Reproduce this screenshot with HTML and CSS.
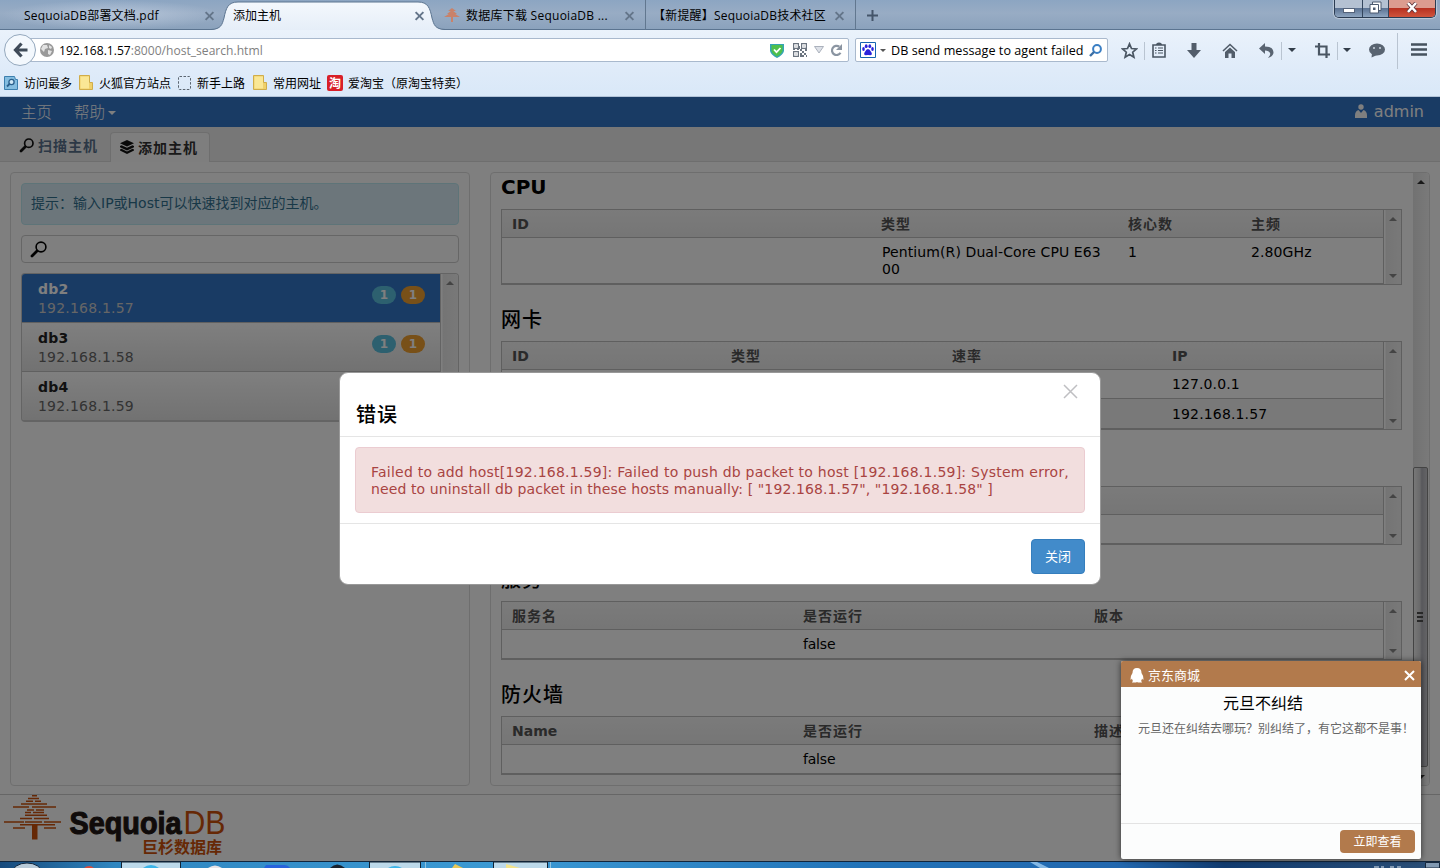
FILE: index.html
```html
<!DOCTYPE html>
<html lang="zh-CN">
<head>
<meta charset="UTF-8" />
<title>添加主机</title>
<link rel="stylesheet" href="styles.css">
</head>
<body>

<!-- 浏览器标签 -->
<div class="tabstrip">
  <div class="btab btab-first"><span>SequoiaDB部署文档.pdf</span><i class="bx"></i></div>
  <div class="btab btab-active">
    <svg class="btab-shape" width="234" height="30" viewBox="0 0 234 30"><defs><linearGradient id="tb" x1="0" y1="0" x2="0" y2="1"><stop offset="0" stop-color="#f4f8fd"/><stop offset="1" stop-color="#e6eef8"/></linearGradient></defs><path d="M0 30C10 29 11 25 13 18C15 8 17 2 27 2H207C217 2 219 8 221 18C223 25 224 29 234 30Z" fill="url(#tb)"/><path d="M0 29.5C10 29 11 25 13 18C15 8 17 2 27 2H207C217 2 219 8 221 18C223 25 224 29 234 29.5" fill="none" stroke="#5b7490"/></svg>
    <span>添加主机</span><i class="bx"></i>
  </div>
  <div class="btab btab-third">
    <svg width="16" height="16" viewBox="0 0 16 16" fill="#c9826a"><path d="M8 1l4 3H4zM8 3l5 4H3zM8 5l8 5H0zM7 10h2v5H7z"/></svg>
    <span>数据库下载 SequoiaDB ...</span><i class="bx"></i>
  </div>
  <div class="btab btab-fourth"><span>【新提醒】SequoiaDB技术社区</span><i class="bx"></i></div>
  <div class="btab-new"><svg width="11" height="11" viewBox="0 0 11 11"><path d="M5.5 0v11M0 5.5h11" stroke="#44556a" stroke-width="2"/></svg></div>
  <div class="winbtns">
    <div class="wb wb-min"><svg width="12" height="6"><rect x=".5" y=".5" width="11" height="4" fill="#fff" stroke="#55637a"/></svg></div>
    <div class="wb wb-max"><svg width="13" height="13" viewBox="0 0 13 13"><path d="M3.500 1h8.500v8.500H3.500z" fill="#fff" stroke="#4d5b70"/><path d="M1 3.500h8.500V12H1z" fill="#fff" stroke="#4d5b70"/><path d="M4 6.500h2.500V9H4z" fill="#4d5b70"/></svg></div>
    <div class="wb wb-close"><svg width="12" height="11" viewBox="0 0 12 11"><path d="M2 1l8 9M10 1l-8 9" stroke="#5a3037" stroke-width="4"/><path d="M2 1l8 9M10 1l-8 9" stroke="#fff" stroke-width="2.600"/></svg></div>
  </div>
</div>

<!-- 地址栏 -->
<div class="navbar">
  <div class="back"><svg width="15" height="16" viewBox="0 0 15 16"><path d="M8.500 1.500L2.500 8l6 6.500M3 8h11.500" fill="none" stroke="#3f4b59" stroke-width="3.200"/></svg></div>
  <div class="url">
    <svg width="14" height="14" viewBox="0 0 14 14"><circle cx="7" cy="7" r="7" fill="#999"/><path d="M3 2l4 0 1 3-3 1-1 3-3-3zM9 2l3 2-1 2-2-1zM8 7l4 1-2 4-2-1z" fill="#e2e2e2"/></svg>
    <span class="addr"><b>192.168.1.57</b>:8000/host_search.html</span>
    <svg width="14" height="15" viewBox="0 0 14 15"><path d="M0 1h14v7q-1 4-7 7Q1 12 0 8z" fill="#35a5b4"/><path d="M1.500 2h11v6q-1 3-5.500 5.500Q2.500 11 1.500 8z" fill="#4fc04c"/><path d="M4 6.500l2.500 2.700L10.500 5" fill="none" stroke="#fff" stroke-width="1.800"/></svg>
    <svg class="qr" width="14" height="14" viewBox="0 0 14 14"><g fill="none" stroke="#6c7580" stroke-width="1.200"><path d="M.6.600h4.800v4.800H.6zM8.600.600h4.800v4.800H8.600zM.6 8.600h4.800v4.800H.6z"/></g><path d="M2.500 2.500h1v1h-1zM10.500 2.500h1v1h-1zM2.500 10.500h1v1h-1zM7 6h2v2H7zM9 8h2v2H9zM12 6h2v2h-2zM7 10h2v4H7zM11 10h2v2h-2zM9 12h2v2H9zM13 12h1v2h-1zM4 6h2v1H4zM0 6h2v1H0zM6 3h1v3H6z" fill="#6c7580"/></svg>
    <svg class="drop" width="10" height="8"><path d="M.5.500h9L5 7z" fill="#dde1e8" stroke="#abb1bc"/></svg>
    <svg class="reload" width="13" height="14" viewBox="0 0 13 14"><path d="M10.500 9.800A4.600 4.600 0 1 1 9.300 3.700" fill="none" stroke="#8b95a2" stroke-width="2.200"/><path d="M12 1v6H6z" fill="#8b95a2"/></svg>
  </div>
  <div class="search">
    <svg width="16" height="16" viewBox="0 0 16 16"><path d="M.5.500h15v15H.5z" fill="#fff" stroke="#1664b0"/><g fill="#2a22dc"><ellipse cx="3.500" cy="7" rx="1.300" ry="1.900"/><ellipse cx="6.200" cy="4.200" rx="1.400" ry="1.900"/><ellipse cx="9.800" cy="4.200" rx="1.400" ry="1.900"/><ellipse cx="12.500" cy="7" rx="1.300" ry="1.900"/><path d="M8 7q1.700 0 3 2.700 2 3-.5 3.500-2.500-.5-5 0-2.500-.5-.5-3.500Q6.300 7 8 7z"/></g></svg>
    <i class="caret-s"></i>
    <span>DB send message to agent failed</span>
    <svg class="mag" width="13" height="13" viewBox="0 0 13 13"><circle cx="8" cy="5" r="3.900" fill="none" stroke="#3b7fc4" stroke-width="2"/><path d="M5 8L1 12" stroke="#3b6ea4" stroke-width="2.400"/></svg>
  </div>
  <div class="tools">
    <div><svg width="17" height="17" viewBox="0 0 17 17"><path d="M8.500 1.800l2 4.700 5 .4-3.800 3.300 1.200 5-4.400-2.700-4.400 2.700 1.200-5L1.500 6.900l5-.4z" fill="none" stroke="#4a5663" stroke-width="1.700"/></svg></div>
    <div class="sep lst"><svg width="14" height="16" viewBox="0 0 14 16"><path d="M1 3h12v12H1z" fill="none" stroke="#4a5663" stroke-width="1.600"/><path d="M4 3q0-2.500 3-2.500T10 3zM3 5.500h1.500v1H3zM6 5.500h5v1H6zM3 8h1.500v1H3zM6 8h5v1H6zM3 10.500h1.500v1H3zM6 10.500h5v1H6z" fill="#4a5663"/></svg></div>
    <div><svg width="14" height="15" viewBox="0 0 14 15"><path d="M4.500 0h5v7H14l-7 8-7-8h4.500z" fill="#525d6a"/></svg></div>
    <div><svg width="16" height="15" viewBox="0 0 16 15"><path d="M1 8l7-6.500L15 8" fill="none" stroke="#525d6a" stroke-width="1.600"/><path d="M3 9l5-4.500L13 9v6H9.500v-4.500h-3V15H3z" fill="#525d6a"/></svg></div>
    <div><svg width="15" height="15" viewBox="0 0 15 15"><path d="M6 0v3.500q8 0 8.500 6Q14.500 13 9 15q3-3 2-5Q10 7.500 6 7.500V11L0 5.500z" fill="#596471"/></svg></div>
    <div class="sep"><i class="caret"></i></div>
    <div class="crop"><svg width="15" height="15" viewBox="0 0 15 15"><path d="M4 0v11.500h11M0 3.500h11.500V15" fill="none" stroke="#4a5663" stroke-width="2.200"/></svg></div>
    <div class="sep"><i class="caret"></i></div>
    <div><svg width="16" height="15" viewBox="0 0 16 15"><ellipse cx="8" cy="6.500" rx="8" ry="6" fill="#596471"/><path d="M3 10l-.5 4.500L8 12z" fill="#596471"/><circle cx="5" cy="5" r="1" fill="#cdd6e0"/><circle cx="11" cy="5" r="1" fill="#cdd6e0"/></svg></div>
    <div class="sep tall"><svg width="16" height="14"><path d="M0 1.500h16M0 6.500h16M0 11.500h16" stroke="#46525e" stroke-width="2.600"/></svg></div>
  </div>
</div>

<!-- 书签栏 -->
<div class="bookmarks">
  <svg width="15" height="16" viewBox="0 0 15 16"><path d="M.5 1.500h10l1 3h2v10H.5z" fill="#84bde0" stroke="#3c7fae"/><circle cx="7.500" cy="7" r="2.600" fill="#cfe8f6" stroke="#2a5f8c" stroke-width="1.300"/><path d="M5.500 9L3 11.500" stroke="#2a5f8c" stroke-width="1.800"/></svg><span class="w1">访问最多</span>
  <svg width="15" height="16" viewBox="0 0 15 16"><path d="M.5.500h10v7h3v7H.5z" fill="#efd06a" stroke="#d0ad4a"/><path d="M1.500 1.500h8.500v12H1.500z" fill="#fae795"/></svg><span class="w2">火狐官方站点</span>
  <svg width="15" height="16"><rect x=".5" y="1.500" width="12" height="13" rx="1" fill="none" stroke="#5b6570" stroke-dasharray="2.500 1.500"/></svg><span class="w3">新手上路</span>
  <svg width="15" height="16" viewBox="0 0 15 16"><path d="M.5.500h10v7h3v7H.5z" fill="#efd06a" stroke="#d0ad4a"/><path d="M1.500 1.500h8.500v12H1.500z" fill="#fae795"/></svg><span class="w4">常用网址</span>
  <em class="tao">淘</em><span>爱淘宝（原淘宝特卖）</span>
</div>

<!-- 页面 -->
<div class="page">
  <div class="topbar">
    <span class="home">主页</span><span>帮助</span><i class="caret-w"></i>
    <span class="user"><svg width="12" height="15" viewBox="0 0 12 15" fill="#fff"><circle cx="6" cy="3" r="2.700"/><path d="M3.500 6L6 9l2.500-3Q12 7 12 11.500V14H0v-2.500Q0 7 3.500 6z"/></svg>admin</span>
  </div>
  <div class="ptabs">
    <div class="ptab"><svg width="15" height="15" viewBox="0 0 15 15"><circle cx="9.800" cy="5.200" r="4.200" fill="none" stroke="#111" stroke-width="1.700"/><path d="M6 9l-4 4" stroke="#111" stroke-width="2.800" stroke-linecap="round"/></svg><span>扫描主机</span></div>
    <div class="ptab on"><svg width="14" height="14" viewBox="0 0 14 14" fill="#111"><path d="M7 0l7 3.300-7 3.200L0 3.300z"/><path d="M0 6l1.500-.8L7 7.800l5.500-2.600L14 6v1.200L7 10.500 0 7.200z"/><path d="M0 9.600l1.500-.8L7 11.400l5.500-2.600 1.500.8v1L7 14 0 10.600z"/></svg><span>添加主机</span></div>
  </div>

  <div class="main">
    <div class="panel left">
      <div class="tip">提示：输入IP或Host可以快速找到对应的主机。</div>
      <div class="filter"><svg width="17" height="17" viewBox="0 0 17 17"><circle cx="11" cy="6" r="4.900" fill="none" stroke="#000" stroke-width="1.600"/><path d="M7 10l-5 5" stroke="#000" stroke-width="2.800" stroke-linecap="round"/></svg></div>
      <div class="hosts">
        <div class="hostlist">
          <div class="host sel"><div><b>db2</b><br>192.168.1.57</div><em class="badge info">1</em><em class="badge warn">1</em></div>
          <div class="host"><div><b>db3</b><br>192.168.1.58</div><em class="badge info">1</em><em class="badge warn">1</em></div>
          <div class="host"><div><b>db4</b><br>192.168.1.59</div></div>
        </div>
        <div class="scroll"><i class="up"></i><i class="down"></i></div>
      </div>
    </div>

    <div class="panel right">
      <div class="detail">
        <h3 class="first">CPU</h3>
        <div class="grid">
          <table>
            <colgroup><col style="width:369px"><col style="width:247px"><col style="width:123px"><col></colgroup>
            <tr><th>ID</th><th class="zh">类型</th><th class="zh">核心数</th><th class="zh">主频</th></tr>
            <tr><td></td><td class="cpu">Pentium(R) Dual-Core CPU E63<br>00</td><td>1</td><td>2.80GHz</td></tr>
          </table>
          <div class="scroll"><i class="up"></i><i class="down"></i></div>
        </div>
        <h3 class="zh">网卡</h3>
        <div class="grid">
          <table>
            <colgroup><col style="width:219px"><col style="width:221px"><col style="width:220px"><col></colgroup>
            <tr><th>ID</th><th class="zh">类型</th><th class="zh">速率</th><th>IP</th></tr>
            <tr><td></td><td></td><td></td><td>127.0.0.1</td></tr>
            <tr class="even"><td></td><td></td><td></td><td>192.168.1.57</td></tr>
          </table>
          <div class="scroll"><i class="up"></i><i class="down"></i></div>
        </div>
        <h3></h3>
        <div class="grid">
          <table>
            <tr><th>&nbsp;</th><th></th><th></th></tr>
            <tr><td>&nbsp;</td><td></td><td></td></tr>
          </table>
          <div class="scroll"><i class="up"></i><i class="down"></i></div>
        </div>
        <h3 class="zh">服务</h3>
        <div class="grid">
          <table>
            <colgroup><col style="width:291px"><col style="width:291px"><col></colgroup>
            <tr><th class="zh">服务名</th><th class="zh">是否运行</th><th class="zh">版本</th></tr>
            <tr><td></td><td class="flag">false</td><td></td></tr>
          </table>
          <div class="scroll"><i class="up"></i><i class="down"></i></div>
        </div>
        <h3 class="zh">防火墙</h3>
        <div class="grid">
          <table>
            <colgroup><col style="width:291px"><col style="width:291px"><col></colgroup>
            <tr><th>Name</th><th class="zh">是否运行</th><th class="zh">描述</th></tr>
            <tr><td></td><td class="flag">false</td><td></td></tr>
          </table>
          <div class="scroll"><i class="up"></i><i class="down"></i></div>
        </div>
      </div>
      <div class="vscroll"><i class="up"></i><div class="thumb"><i></i><i></i><i></i></div><i class="down"></i></div>
    </div>
  </div>

  <div class="footer">
    <svg width="230" height="66" viewBox="0 0 230 66">
      <path d="M32 .800h5M28 3.500h11M26 6.200h7M35 6.200h6M21 9h26M13 12h16M32 12h24M27 15h7M36 15h8M25 17.500h6M33 17.500h11M25 20.200h22M20 23.500h12M34 23.500h15M4 27h20M25 27h17M44 27h17M20 29.800h35M13 33h12M44 33h12" stroke="#cd510a" stroke-width="1.500" fill="none"/>
      <path d="M32 30h5.500v14.500H32z" fill="#cd510a"/>
      <text x="69.500" y="38.500" class="logo-b" textLength="112" lengthAdjust="spacingAndGlyphs">Sequoia</text>
      <text x="183.500" y="38.500" class="logo-l" textLength="42" lengthAdjust="spacingAndGlyphs">DB</text>
      <text x="142" y="57.500" class="logo-c" textLength="80">巨杉数据库</text>
    </svg>
  </div>

  <div class="backdrop"></div>

  <!-- 错误窗口 -->
  <div class="modal">
    <div class="modal-head"><h4>错误</h4><svg class="modal-x" width="15" height="15"><path d="M1 1l13 13M14 1L1 14" stroke="#bfbfc2" stroke-width="1.500"/></svg></div>
    <div class="modal-body"><div class="danger">Failed to add host[192.168.1.59]: Failed to push db packet to host [192.168.1.59]: System error,<br><span class="line2">need to uninstall db packet in these hosts manually: [ "192.168.1.57", "192.168.1.58" ]</span></div></div>
    <div class="modal-foot"><button class="btn">关闭</button></div>
  </div>
</div>

<!-- 任务栏 -->
<div class="taskbar">
  <svg width="1440" height="7" viewBox="0 0 1440 7">
    <defs><linearGradient id="tk"><stop offset="0" stop-color="#174a7c"/><stop offset=".08" stop-color="#2f86c0"/><stop offset=".35" stop-color="#3c9ad4"/><stop offset=".6" stop-color="#2273b8"/><stop offset=".78" stop-color="#2267ae"/><stop offset=".85" stop-color="#123c70"/><stop offset="1" stop-color="#2c5078"/></linearGradient></defs>
    <path d="M0 0h1440v7H0z" fill="url(#tk)"/><path d="M0 .500h1440" stroke="#12263c"/>
    <ellipse cx="27" cy="12" rx="15" ry="10" fill="#b9cbd9" stroke="#10253c"/>
    <circle cx="89" cy="12" r="7" fill="#da4c3c"/>
    <path d="M121.500 7V1h59v6M369.500 7V1h51v6M493.500 7V1h54v6" fill="#bcd9ea" stroke="#123"/>
    <path d="M143 7q8-6 16 0M388 7q7-4 14 0" fill="#3bb4e8"/>
    <path d="M208 7q7-5 14 0" fill="#e8e4e6"/><path d="M266 4h18q4 0 6 3h-26z" fill="#2763dc"/><path d="M330 7q7-7 15 0z" fill="#18222e"/><path d="M452 7l3-4 8 4z" fill="#e8c858"/><path d="M506 3l14 4h-14z" fill="#f3e48c"/>
    <path d="M425.500 1v6M550.500 1v6" stroke="#8fc2e0"/><path d="M1030 1h7l12 6h-9z" fill="#84b8e4"/>
    <path d="M1374 6h5M1381 6h3M1390 6h4M1397 6h4" stroke="#dfe8f0"/><path d="M1425.500 1.500h14V7h-14z" fill="#8199b2" stroke="#16283e"/>
  </svg>
</div>

<!-- 弹窗广告 -->
<div class="popup">
  <div class="popup-head"><svg width="14" height="15" viewBox="0 0 14 15"><path d="M7 0q4.500 0 4.500 5 2.500 3.500 2 6.500-.8.500-1.500-1-.2 1.500-1 2.500 1 .5 1 1.500H8l-1-.5-1 .5H2q0-1 1-1.500-.8-1-1-2.500-.7 1.500-1.500 1Q0 8.500 2.500 5 2.500 0 7 0z" fill="#fff"/></svg><span>京东商城</span><svg class="popup-x" width="11" height="11"><path d="M1 1l9 9M10 1l-9 9" stroke="#fff" stroke-width="2"/></svg></div>
  <div class="popup-body"><h5>元旦不纠结</h5><p>元旦还在纠结去哪玩？别纠结了，有它这都不是事！</p></div>
  <div class="popup-foot"><span class="go">立即查看</span></div>
</div>

</body>
</html>
```
FILE: styles.css
```css
* {
  box-sizing: border-box;
  margin: 0;
  padding: 0;
}

body {
  width: 1440px;
  height: 868px;
  overflow: hidden;
  position: relative;
  font: 12px "Open Sans", "Noto Sans CJK SC", sans-serif;
  background: #dbe9f8;
  color: #000;
}

svg { display: block; flex: none; }
em { font-style: normal; }

/* 浏览器标签 */
.tabstrip {
  display: flex;
  height: 30px;
  background: linear-gradient(#8ca5c2, #98acc4 45%, #8ba2bc);
  border-bottom: 1px solid #5b7490;
}
.btab {
  display: flex;
  align-items: center;
  height: 30px;
  white-space: nowrap;
  position: relative;
}
.btab span { flex: 1; position: relative; }
.btab-first { width: 223px; padding: 0 9px 0 24px; letter-spacing: .2px; background: radial-gradient(ellipse at 50% 50%, rgba(215,225,240,.5), rgba(215,225,240,0) 70%); }
.btab-active { width: 213px; padding: 0 12px 0 10px; z-index: 1; }
.btab-shape { position: absolute; left: -12px; top: 0; }
.btab-third { width: 210px; padding: 0 11px 0 8px; gap: 6px; border-right: 1px solid #61778f; letter-spacing: .25px; }
.btab-fourth { width: 210px; padding: 0 11px 0 7px; border-right: 1px solid #61778f; letter-spacing: .2px; }
.btab-new { padding: 10px 0 0 11px; }

.bx { position: relative; width: 9px; height: 9px; flex: none; }
.bx::before, .bx::after {
  content: "";
  position: absolute;
  left: -1px;
  top: 4px;
  width: 11px;
  height: 2px;
  background: #64758a;
  transform: rotate(45deg);
}
.bx::after { transform: rotate(-45deg); }

.winbtns {
  display: flex;
  margin-left: auto;
  margin-right: 4px;
  width: 102px;
  height: 18px;
  border: 1px solid #2b3c52;
  border-top: 0;
  border-radius: 0 0 5px 5px;
  overflow: hidden;
  box-shadow: 0 0 1px 1px rgba(255,255,255,.4);
}
.wb { display: flex; align-items: center; justify-content: center; background: linear-gradient(#b4c1d2 45%, #5d7494 50%, #8ea5c0); }
.wb-min { width: 28px; padding-top: 4px; border-right: 1px solid #34465d; }
.wb-max { width: 26px; padding-bottom: 2px; border-right: 1px solid #34465d; }
.wb-close { flex: 1; padding-bottom: 2px; background: linear-gradient(#dc9c8f 45%, #b83221 50%, #d0543c); }

/* 地址栏 */
.navbar {
  display: flex;
  height: 40px;
  align-items: center;
  background: linear-gradient(#eaf2fb, #dfebf9);
}
.back {
  width: 32px;
  height: 32px;
  margin-left: 4px;
  border: 1px solid #94a8bd;
  border-radius: 50%;
  background: #f3f8fd;
  display: flex;
  align-items: center;
  justify-content: center;
  position: relative;
  z-index: 1;
}
.url, .search {
  height: 24px;
  background: #fff;
  border: 1px solid #a9b9cd;
  border-radius: 2px;
  display: flex;
  align-items: center;
  white-space: nowrap;
}
.url { width: 820px; margin-left: -7px; padding: 0 5px 0 10px; }
.addr { flex: 1; margin-left: 5px; color: #7f7f7f; font-size: 12.100px; }
.addr b { font-weight: normal; color: #000; }
.qr { margin-left: 9px; }
.drop { margin-left: 7px; }
.reload { margin-left: 6px; }
.search { width: 253px; margin-left: 6px; padding: 0 5px 0 4px; font-size: 12.600px; }
.search span { flex: 1; margin-left: 5px; letter-spacing: .04px; }
.caret-s { margin-left: 4px; border: 3px solid transparent; border-top-color: #555; border-bottom: 0; }
.tools {
  display: grid;
  height: 40px;
  padding-left: 6px;
  grid-template-columns: 30px 35px 30px 42px 30px 21px 35px 20px 40px 43px;
}
.tools > div { display: flex; align-items: center; justify-content: center; position: relative; }
.sep::before {
  content: "";
  position: absolute;
  left: 0;
  top: 12px;
  height: 18px;
  border-left: 1px solid #b9c4d1;
}
.tall::before { top: 3px; height: 36px; }
.lst { padding-right: 5px; }
.crop { padding-left: 5px; }
.caret { border: 4px solid transparent; border-top-color: #333e4a; border-bottom: 0; }

/* 书签栏 */
.bookmarks {
  display: flex;
  align-items: center;
  height: 27px;
  padding-left: 4px;
  background: linear-gradient(#dfebf9, #d9e8f8);
  border-bottom: 1px solid #b2c3d8;
  white-space: nowrap;
}
.bookmarks span { margin-left: 5px; }
.bookmarks .w1 { width: 55px; }
.bookmarks .w2 { width: 79px; }
.bookmarks .w3 { width: 56px; margin-left: 4px; }
.bookmarks .w4 { width: 54px; }
.tao {
  width: 16px;
  height: 16px;
  background: #d81f28;
  border-radius: 2px;
  color: #fff;
  font: bold 12px/15px "Noto Sans CJK SC", sans-serif;
  text-align: center;
}
.bookmarks .tao + span { margin-left: 5px; }

/* 页面 */
.page {
  position: relative;
  height: 764px;
  background: #fff;
  font: 14px/17px "DejaVu Sans", "Noto Sans CJK SC", sans-serif;
  overflow: hidden;
}
.topbar {
  display: flex;
  align-items: center;
  height: 30px;
  padding: 0 16px 2px 21px;
  background: #3276c9;
  color: #fff;
  font-size: 16px;
  font-weight: 300;
}
.topbar span { font-family: "Noto Sans CJK SC", sans-serif; font-size: 15.500px; }
.topbar .user { font-family: "DejaVu Sans", sans-serif; font-weight: normal; font-size: 16px; }
.home { margin-right: 22px; }
.caret-w { margin: 4px 0 0 3px; border: 4px solid transparent; border-top-color: #fff; border-bottom: 0; }
.user { display: flex; align-items: center; gap: 7px; margin-left: auto; }

.ptabs {
  display: flex;
  align-items: flex-end;
  height: 35px;
  padding-left: 10px;
  background: #eee;
  border-bottom: 1px solid #ddd;
}
.ptab {
  display: flex;
  align-items: center;
  gap: 4px;
  width: 100px;
  height: 29px;
  padding: 0 0 3px 9px;
  color: #58718c;
  font-weight: bold;
  letter-spacing: 1px;
  white-space: nowrap;
}
.ptab span { padding-top: 2px; }
.ptab.on {
  height: 30px;
  margin-bottom: -1px;
  padding: 0 0 1px 9px;
  border: 1px solid #ddd;
  border-bottom: 0;
  border-radius: 4px 4px 0 0;
  background: #fcfcfc;
  color: #333;
}

.main { display: flex; gap: 20px; height: 632px; padding: 10px 10px 7px; }
.panel {
  height: 614px;
  border: 1px solid #ddd;
  border-radius: 4px;
}
.left { width: 460px; padding: 10px; }
.right { flex: 1; display: flex; overflow: hidden; }

.tip {
  height: 42px;
  padding: 11px 9px;
  border: 1px solid #bce8f1;
  border-radius: 4px;
  background: #d9edf7;
  color: #31708f;
}
.filter {
  height: 28px;
  margin: 10px 0;
  padding: 5px 8px;
  border: 1px solid #ccc;
  border-radius: 4px;
}
.hosts {
  display: flex;
  height: 149px;
  border: 1px solid #c8c8c8;
  border-bottom-width: 2px;
  border-radius: 4px;
  overflow: hidden;
}
.hosts .scroll { width: 17px; }
.hostlist { flex: 1; border-right: 1px solid #c8c8c8; }
.host {
  display: flex;
  height: 49px;
  padding: 6px 15px 0 16px;
  line-height: 19px;
  letter-spacing: .2px;
  color: #666;
  background: linear-gradient(#fff, #e4e4e4);
  border-bottom: 1px solid #c0c0c0;
}
.host b { color: #222; letter-spacing: .2px; }
.host div { flex: 1; }
.host.sel { background: #3276c9; color: #ccc; }
.host.sel b { color: #fff; }
.badge {
  width: 24px;
  height: 18px;
  margin: 6px 0 0 5px;
  border-radius: 9px;
  color: #fff;
  font-weight: bold;
  font-size: 12px;
  line-height: 18px;
  text-align: center;
}
.info { background: #5bc0de; }
.warn { background: #f0a030; }

/* 滚动条 */
.scroll, .vscroll {
  display: flex;
  flex-direction: column;
  justify-content: space-between;
  align-items: center;
  width: 18px;
  padding: 7px 0 6px;
  background: linear-gradient(90deg, #fff 1px, #e9e9e9 2px, #f2f2f2);
}
.up, .down { border: 4px solid transparent; }
.up { border-bottom-color: #888; border-top: 0; }
.down { border-top-color: #888; border-bottom: 0; }
.vscroll { width: 16px; margin-left: auto; background: linear-gradient(90deg, #e4e4e4, #f4f4f4); }
.vscroll .up { border-bottom-color: #333; }
.vscroll .down { border-top-color: #333; }
.thumb {
  width: 15px;
  height: 300px;
  margin: auto 1px 8px 0;
  padding: 144px 4px 0 3px;
  border: 1px solid #888;
  border-radius: 2px;
  background: linear-gradient(90deg, #f0f0f0, #d4d4d6 45%, #b0b0b8 60%, #c8c8cc);
}
.thumb i { display: block; height: 2px; margin-bottom: 2px; background: #505050; }

/* 主机信息 */
.detail { width: 912px; padding: 0 0 0 10px; flex: none; }
.detail h3 {
  height: 56px;
  padding-top: 12px;
  font-size: 20px;
  line-height: 44px;
  font-weight: bold;
}
.detail h3.zh, .modal-head h4 { font-family: "Noto Sans CJK SC", sans-serif; font-weight: 500; letter-spacing: 1px; }
.detail h3.first { margin-top: -20px; }
.grid { display: flex; width: 901px; border: 1px solid #bfbfbf; border-width: 1px 1px 0 1px; }
.grid table {
  width: 882px;
  table-layout: fixed;
  border-spacing: 0;
  border-right: 1px solid #bfbfbf;
  flex: none;
}
.grid .scroll { width: 17px; padding-top: 7px; border-bottom: 1px solid #bfbfbf; }
th {
  height: 28px;
  padding: 2px 10px 0;
  text-align: left;
  color: #555;
  background: linear-gradient(#f6f6f6, #ececec);
  border-bottom: 1px solid #bfbfbf;
}
th.zh { letter-spacing: 1px; }
td { height: 29px; padding: 6px 10px 5px; vertical-align: top; border-bottom: 1px solid #bfbfbf; white-space: nowrap; letter-spacing: .1px; }
tr:last-child td { height: 30px; border-bottom-width: 2px; }
tr.even:last-child td { height: 31px; padding-top: 7px; background: #f3f3f3; letter-spacing: .15px; }
td.cpu { letter-spacing: .1px; padding-left: 11px; }
td.flag { letter-spacing: -.2px; }

.footer { border-top: 1px solid #ccc; height: 67px; }
.logo-b { font: bold 31.500px "Liberation Sans", sans-serif; fill: #211715; stroke: #211715; stroke-width: 1.1px; }
.logo-l { font: 33px "Liberation Sans", sans-serif; fill: #cd510a; }
.logo-c { font: bold 16px "Noto Sans CJK SC", sans-serif; fill: #cd510a; }

.backdrop { position: absolute; inset: 0; background: rgba(0,0,0,.5); }

/* 错误窗口 */
.modal {
  position: absolute;
  left: 339px;
  top: 275px;
  width: 762px;
  height: 213px;
  background: #fff;
  border: 1px solid #999;
  border-radius: 9px;
}
.modal-head { display: flex; justify-content: space-between; height: 64px; padding: 11px 22px 0 16px; border-bottom: 1px solid #e5e5e5; }
.modal-head h4 { font-size: 20px; line-height: 24px; margin-top: 18px; }
.modal-body { padding: 10px 15px; }
.danger {
  height: 66px;
  padding: 16px 15px 0;
  border: 1px solid #ebccd1;
  border-radius: 4px;
  background: #f2dede;
  color: #a94442;
  white-space: nowrap;
  letter-spacing: .235px;
}
.line2 { letter-spacing: .11px; }
.modal-foot { display: flex; justify-content: flex-end; padding: 15px; border-top: 1px solid #e5e5e5; }
.btn {
  width: 54px;
  height: 35px;
  padding-bottom: 2px;
  border: 1px solid #357ebd;
  border-radius: 4px;
  background: #428bca;
  color: #fff;
  font: 13px "Noto Sans CJK SC", sans-serif;
}

.taskbar { height: 7px; overflow: hidden; }

/* 弹窗 */
.popup {
  position: absolute;
  left: 1121px;
  top: 661px;
  width: 300px;
  height: 198px;
  background: #fcfdfd;
  border-radius: 2px;
  box-shadow: 0 0 6px rgba(0,0,0,.6);
  font-family: "Noto Sans CJK SC", sans-serif;
}
.popup-head { display: flex; align-items: center; gap: 4px; height: 26px; padding: 2px 6px 0 9px; border-radius: 2px 2px 0 0; background: #b27a4c; color: #fff; font-size: 13px; }
.popup-head span { padding-bottom: 2px; }
.popup-x { margin-left: auto; }
.popup-body { height: 137px; padding-top: 3px; border-bottom: 1px solid #e3e3e3; }
.popup-body h5 { font-size: 16px; line-height: 24px; font-weight: normal; text-align: center; padding-right: 16px; }
.popup-body p { padding-left: 17px; margin-top: 5px; line-height: 18px; color: #666; white-space: nowrap; }
.popup-foot { display: flex; justify-content: flex-end; padding: 6px; }
.go { width: 75px; height: 23px; border-radius: 4px; background: #b27a4c; color: #fff; text-align: center; line-height: 22px; }
```
